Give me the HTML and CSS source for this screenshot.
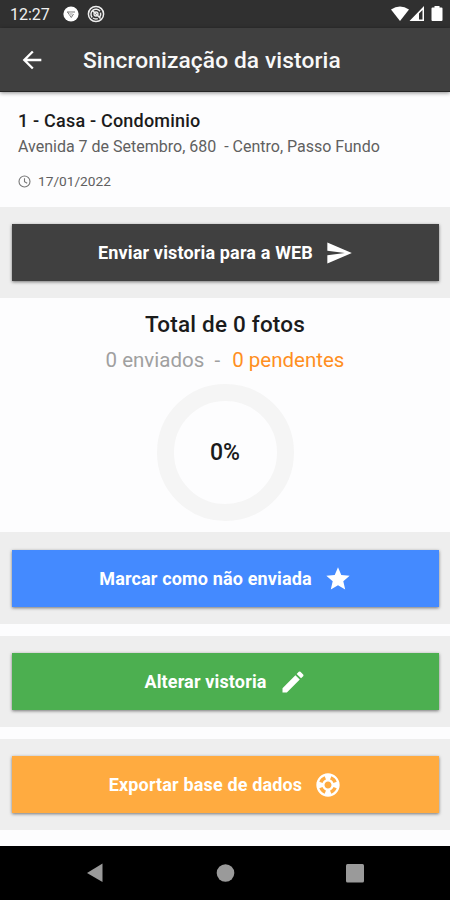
FILE: index.html
```html
<!DOCTYPE html>
<html lang="pt-BR">
<head>
<meta charset="utf-8">
<title>Sincronização da vistoria</title>
<link rel="stylesheet" href="styles.css">
</head>
<body>
<div class="status">
  <span class="clock">12:27</span>
  <svg class="chrome" width="16" height="16" viewBox="0 0 16 16"><circle cx="8" cy="8" r="7.600" fill="#fff"/><path d="M4 6h8M4.500 6L8.300 11.500L10.500 8" fill="none" stroke="#777" stroke-width="1"/><circle cx="8" cy="8" r="1.800" fill="#ccc"/></svg>
  <svg class="sync" width="18" height="18" viewBox="0 0 18 18" fill="none" stroke="#eee"><circle cx="9" cy="9" r="7.600" stroke-width="1.500"/><path d="M5.200 12.400A5 5 0 0 1 6 5.100a5 5 0 0 1 7 1.200M13.500 7.600a5 5 0 0 1-.8 4.400M6 13a5 5 0 0 0 4.800.6M5.500 5.500l8 8" stroke-width="1.500"/><circle cx="9" cy="9" r="2" stroke-width="1.300"/></svg>
  <svg class="signals" width="54" height="18" viewBox="0 0 54 18" fill="#fff"><path d="M1 4.500Q10 -1.300 19 4.500L10 16Z"/><path fill-rule="evenodd" d="M34 1v15H19.500ZM32.500 5v9.500H29V8.500Z"/><path d="M42.500 2.500h2V1h5v1.500h2q1 0 1 1V15q0 1-1 1h-9q-1 0-1-1V3.500q0-1 1-1Z"/></svg>
</div>
<header class="appbar">
  <svg class="back" width="28" height="28" viewBox="0 0 24 24" fill="#fff"><path d="M20 11H7.830l5.590-5.590L12 4l-8 8 8 8 1.410-1.410L7.830 13H20v-2z"/></svg>
  <h1>Sincronização da vistoria</h1>
</header>
<main>
  <section class="info">
    <h2>1 - Casa - Condominio</h2>
    <p class="address">Avenida 7 de Setembro, 680&nbsp; - Centro, Passo Fundo</p>
    <p class="date"><svg width="13" height="13" viewBox="0 0 13 13" fill="none" stroke="#777" stroke-width="1.100"><circle cx="6.500" cy="6.500" r="5.500"/><path d="M6.500 3.300v3.500l2.700 1.500"/></svg><span>17/01/2022</span></p>
  </section>
  <div class="panel"><button class="dark"><span>Enviar vistoria para a WEB</span><svg width="28" height="28" viewBox="0 0 24 24"><path d="M2.010 21L23 12 2.010 3 2 10l15 2-15 2z"/></svg></button></div>
  <section class="photos">
    <h3>Total de 0 fotos</h3>
    <p class="counts"><span class="sent">0 enviados&nbsp; -&nbsp; </span><span class="pending">0 pendentes</span></p>
    <div class="ring"><span>0%</span></div>
  </section>
  <div class="panel"><button class="blue"><span>Marcar como não enviada</span><svg width="28" height="28" viewBox="0 0 24 24"><path d="M12 17.270L18.180 21l-1.640-7.030L22 9.240l-7.190-.61L12 2 9.190 8.630 2 9.240l5.460 4.730L5.820 21z"/></svg></button></div>
  <div class="panel"><button class="green"><span>Alterar vistoria</span><svg width="28" height="28" viewBox="0 0 24 24"><path d="M3 17.250V21h3.750L17.810 9.940l-3.750-3.750L3 17.250zM20.710 7.040c.39-.39.39-1.020 0-1.410l-2.340-2.340a.996.996 0 0 0-1.410 0l-1.830 1.830 3.750 3.750 1.830-1.830z"/></svg></button></div>
  <div class="panel"><button class="orange"><span>Exportar base de dados</span><svg width="28" height="28" viewBox="0 0 24 24"><path d="M12 2C6.480 2 2 6.480 2 12s4.480 10 10 10 10-4.480 10-10S17.520 2 12 2zm7.460 7.120l-2.780 1.150c-.51-1.360-1.580-2.440-2.950-2.940l1.150-2.780c2.100.8 3.770 2.470 4.580 4.570zM12 15c-1.660 0-3-1.340-3-3s1.340-3 3-3 3 1.340 3 3-1.340 3-3 3zM9.130 4.540l1.170 2.780c-1.380.5-2.470 1.590-2.980 2.970L4.540 9.130c.81-2.110 2.480-3.780 4.590-4.590zM4.540 14.870l2.780-1.150c.51 1.380 1.590 2.460 2.970 2.960l-1.170 2.780c-2.100-.81-3.770-2.480-4.580-4.590zm10.340 4.590l-1.150-2.780c1.370-.51 2.450-1.590 2.950-2.970l2.780 1.170c-.81 2.100-2.480 3.770-4.580 4.580z"/></svg></button></div>
</main>
<nav class="navbar">
  <svg width="20" height="22" viewBox="0 0 20 22"><path d="M17.500 1.500v18.500L2 11Z"/></svg>
  <svg width="20" height="22" viewBox="0 0 20 22"><circle cx="10.500" cy="11" r="8.800"/></svg>
  <svg width="20" height="22" viewBox="0 0 20 22"><rect x="1" y="2" width="18" height="18.500" rx="1.500"/></svg>
</nav>
</body>
</html>
```
FILE: styles.css
```css
* { box-sizing: border-box; }
body {
  margin: 0;
  width: 450px;
  height: 900px;
  display: flex;
  flex-direction: column;
  overflow: hidden;
  background: #fdfdfe;
  font-family: Roboto, "Liberation Sans", sans-serif;
  color: #1b1b1b;
}
h1, h2, h3, p { margin: 0; font-weight: 500; white-space: nowrap; }
svg { flex: none; display: block; }
.status {
  height: 28px;
  flex: none;
  background: #303030;
  display: flex;
  align-items: center;
  padding: 0 6px 0 10px;
  color: #f0f0f0;
}
.clock { width: 53px; font-size: 16px; line-height: 28px; padding-top: 2px; }
.sync { margin-left: 8px; }
.signals { margin-left: auto; }
.appbar {
  height: 64px;
  flex: none;
  background: #404040;
  display: flex;
  align-items: center;
  padding-left: 18px;
  border-bottom: 1px solid #262626;
  box-shadow: 0 1px 4px rgba(0, 0, 0, .45);
  z-index: 1;
}
h1 { margin: 3px 0 0 37px; color: #f8f8f8; font-size: 22.700px; line-height: 30px; letter-spacing: .12px; }
main { flex: 1; min-height: 0; overflow: hidden; }
.info { height: 114.600px; padding: 17px 18px 0; }
h2 { font-size: 18px; line-height: 24px; letter-spacing: .2px; }
.address { margin-top: 4px; font-size: 16px; line-height: 20px; font-weight: 400; color: #606060; }
.date { display: flex; align-items: center; margin-top: 15px; gap: 7px; font-size: 13.700px; line-height: 18px; font-weight: 400; color: #606060; }
.panel { height: 91.500px; padding: 17.200px 11px 0 12px; background: #eee; }
.panel + .panel { margin-top: 11.600px; }
button {
  width: 100%;
  height: 57.500px;
  border: 0;
  padding: 1px 0 0;
  display: flex;
  align-items: center;
  justify-content: center;
  gap: 12px;
  font: 700 18px/24px Roboto, "Liberation Sans", sans-serif;
  letter-spacing: .15px;
  color: #fff;
  box-shadow: 0 1px 3px rgba(0, 0, 0, .5);
}
button svg { fill: #fff; }
.dark { background: #404040; }
.blue { background: #448aff; }
.green { background: #4caf50; }
.orange { background: #ffab40; }
.photos { height: 234.400px; padding-top: 11px; text-align: center; }
h3 { font-size: 22.500px; line-height: 30px; letter-spacing: .2px; }
.counts { margin-top: 8px; font-size: 20.500px; line-height: 26px; font-weight: 400; }
.sent { color: #a0a0a0; }
.pending { margin-left: 2px; color: #ff8f1f; }
.ring {
  width: 137px;
  height: 137px;
  margin: 11px auto 0;
  border: 17px solid #f5f5f5;
  border-radius: 50%;
  display: flex;
  align-items: center;
  justify-content: center;
  font-size: 23px;
  font-weight: 500;
}
.navbar {
  height: 54px;
  flex: none;
  background: #000;
  display: flex;
  justify-content: center;
  align-items: center;
  gap: 110px;
}
.navbar svg { fill: #9a9a9a; }
```
